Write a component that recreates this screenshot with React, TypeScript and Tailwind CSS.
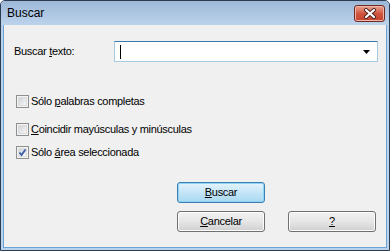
import { useState } from "react";

const font = { fontFamily: '"Liberation Sans", Arial, sans-serif' };

function CheckBox({ checked }: { checked?: boolean }) {
    return (
        <div className="w-[13px] h-[13px] border border-[#8e8f8f] bg-[#f4f4f4] flex items-center justify-center shrink-0">
            <div className="w-[9px] h-[9px] border border-[#dcdcdc] bg-gradient-to-br from-[#cfd3d8] to-[#f7f7f7] relative">
                {checked && (
                    <svg width="11" height="11" viewBox="0 0 11 11" className="absolute -left-[2px] -top-[2px]">
                        <path d="M2.5 5.5 L4.5 8 L8.5 2.5" stroke="#3a5ba8" strokeWidth="1.8" fill="none" />
                    </svg>
                )}
            </div>
        </div>
    );
}

function Button({ children, primary }: { children: React.ReactNode; primary?: boolean }) {
    return (
        <button
            className={
                "w-[88px] h-[21px] rounded-[3px] border text-[11px] text-black flex items-center justify-center " +
                (primary
                    ? "border-[#3c7fb1] bg-gradient-to-b from-[#e5f4fc] via-[#c4e5f6] to-[#a9d9f2] shadow-[inset_0_0_0_1px_#8fd3f7]"
                    : "border-[#707070] bg-gradient-to-b from-[#f2f2f2] via-[#e6e6e6] to-[#d0d0d0] shadow-[inset_0_0_0_1px_#fcfcfc]")
            }
        >
            {children}
        </button>
    );
}

export default function App() {
    const [opts] = useState([
        { pre: "Sólo ", key: "p", post: "alabras completas", checked: false, mt: "mt-[33px]" },
        { pre: "", key: "C", post: "oincidir mayúsculas y minúsculas", checked: false, mt: "mt-[15px]" },
        { pre: "Sólo ", key: "á", post: "rea seleccionada", checked: true, mt: "mt-[10px]" },
    ]);

    return (
        <div className="w-[390px] h-[251px] flex flex-col border border-[#2a3b52] rounded-t-[5px] overflow-hidden bg-[#b9d1ea]" style={font}>
            <div className="h-[24px] shrink-0 flex items-center justify-between pl-[6px] pr-[4px] bg-gradient-to-b from-[#9db8d7] to-[#bcd3ec]">
                <span className="text-[12px] text-black">Buscar</span>
                <div className="w-[31px] h-[17px] rounded-[3px] border border-[#6e2a23] bg-gradient-to-b from-[#e8a493] via-[#d0553f] to-[#c5442e] flex items-center justify-center shadow-[inset_0_0_0_1px_#f1b6a7]">
                    <svg width="14" height="11" viewBox="0 0 14 11">
                        <path d="M3 2 L11 9 M11 2 L3 9" stroke="#4a2420" strokeWidth="4" strokeLinecap="round" />
                        <path d="M3 2 L11 9 M11 2 L3 9" stroke="#ffffff" strokeWidth="2.2" strokeLinecap="round" />
                    </svg>
                </div>
            </div>
            <div className="flex-1 mx-[2px] mb-[2px] border-l border-r border-b border-[#6ba3d6] bg-[#f0f0f0] flex flex-col pl-[10px] text-[11px] tracking-[-0.3px] text-black">
                <div className="flex items-center mt-[16px] h-[21px]">
                    <span className="w-[100px]">
                        Buscar <span className="underline">t</span>exto:
                    </span>
                    <div className="w-[264px] h-[21px] bg-white border border-[#a4c9e3] border-t-[#3d7bad] flex items-center justify-between pl-[5px] pr-[7px]">
                        <div className="w-[1px] h-[14px] bg-black" />
                        <svg width="7" height="4" viewBox="0 0 7 4">
                            <path d="M0 0 H7 L3.5 4 Z" fill="#000" />
                        </svg>
                    </div>
                </div>
                {opts.map((o) => (
                    <div key={o.post} className={"flex items-center gap-[2px] ml-[2px] h-[13px] " + o.mt}>
                        <CheckBox checked={o.checked} />
                        <span>
                            {o.pre}
                            <span className="underline">{o.key}</span>
                            {o.post}
                        </span>
                    </div>
                ))}
                <div className="flex flex-col gap-[8px] mt-[23px] pl-[163px]">
                    <Button primary>
                        <span className="underline">B</span>uscar
                    </Button>
                    <div className="flex gap-[23px]">
                        <Button>
                            <span className="underline">C</span>ancelar
                        </Button>
                        <Button>
                            <span className="underline">?</span>
                        </Button>
                    </div>
                </div>
            </div>
        </div>
    );
}
